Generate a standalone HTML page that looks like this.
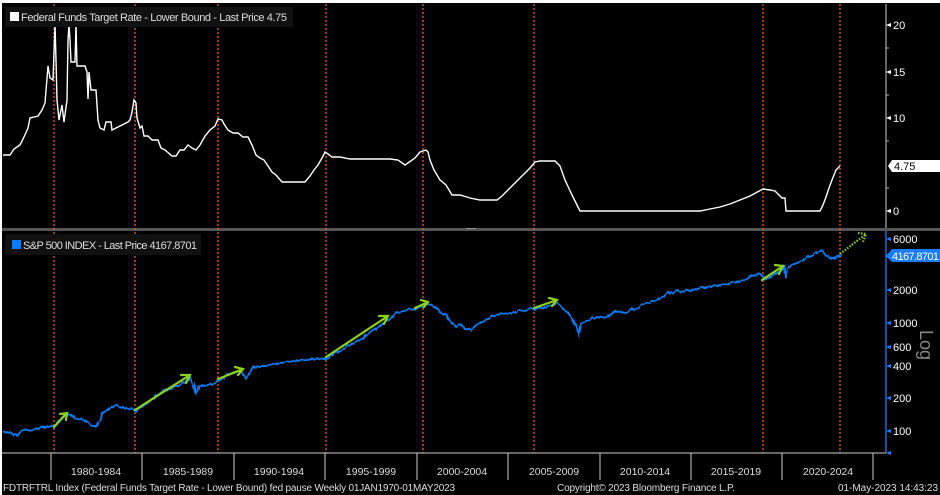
<!DOCTYPE html>
<html><head><meta charset="utf-8"><style>
html,body{margin:0;padding:0;background:#000;}
svg{display:block;}
text{font-family:"Liberation Sans",sans-serif;}
</style></head><body>
<svg width="940" height="495" viewBox="0 0 940 495" xmlns="http://www.w3.org/2000/svg">
<defs>
<filter id="jit" x="-5%" y="-20%" width="110%" height="140%">
<feTurbulence type="turbulence" baseFrequency="0.2 0.05" numOctaves="2" seed="3" result="t"/>
<feDisplacementMap in="SourceGraphic" in2="t" scale="4" xChannelSelector="R" yChannelSelector="G"/>
</filter>
</defs>
<rect width="940" height="495" fill="#000"/>
<rect x="0" y="0" width="940" height="3" fill="#fff"/>
<rect x="0" y="0" width="2" height="495" fill="#fff"/>
<rect x="2" y="228" width="938" height="3" fill="#555"/>
<rect x="466" y="228" width="10" height="1" fill="#999"/>
<g stroke="#e8601c" stroke-width="1.3" stroke-dasharray="2,2">
<line x1="54" y1="4" x2="54" y2="453"/><line x1="135" y1="4" x2="135" y2="453"/>
<line x1="218" y1="4" x2="218" y2="453"/><line x1="326" y1="4" x2="326" y2="453"/>
<line x1="423" y1="4" x2="423" y2="453"/><line x1="534" y1="4" x2="534" y2="453"/>
<line x1="763" y1="4" x2="763" y2="453"/><line x1="840" y1="4" x2="840" y2="453"/>
</g>
<line x1="886" y1="4" x2="886" y2="228" stroke="#ccc" stroke-width="1"/>
<g fill="#fff" font-size="11">
<path d="M886 25l5-2v4z M886 72l5-2v4z M886 118l5-2v4z M886 211l5-2v4z"/>
<text x="893" y="29">20</text><text x="893" y="76">15</text><text x="893" y="122">10</text><text x="893" y="215">0</text>
</g>
<g stroke="#aaa"><line x1="886" y1="48" x2="889" y2="48"/><line x1="886" y1="95" x2="889" y2="95"/><line x1="886" y1="141" x2="889" y2="141"/><line x1="886" y1="188" x2="889" y2="188"/></g>
<path d="M888 166l4-6h48v12h-48z" fill="#fff"/>
<text x="894" y="170" font-size="11" fill="#000">4.75</text>
<polyline fill="none" stroke="#fff" stroke-width="1.4" points="3,155 10,155 14,149 20,145 24,137 28,128 30,118 38,116 42,110 45,103 48,66 50,78 53,80 55,25 56,60 57,100 59,120 62,105 64,122 67,100 68,40 69,25 70,40 71,62 75,62 76,25 77,66 85,66 87,72 88,99 89,72 91,90 96,90 98,120 100,128 104,130 106,122 111,122 112,130 128,122 130,120 132,112 134,100 136,103 137,118 140,128 142,126 144,136 148,136 152,140 158,140 161,148 165,150 172,156 176,156 180,150 184,150 188,145 192,148 196,150 200,145 205,136 210,130 215,126 218,119 222,120 224,124 228,130 233,133 238,133 243,137 248,137 252,145 256,155 260,158 264,160 268,166 272,172 276,175 282,182 305,182 310,176 314,170 318,165 322,158 325,152 328,154 332,157 340,157 350,159 390,159 398,160 405,165 415,158 420,152 426,150 428,152 430,160 434,170 440,180 446,185 452,195 460,195 470,198 480,200 497,200 502,196 510,188 520,178 530,168 535,162 540,161 555,161 560,166 565,180 572,195 577,205 580,211 700,211 710,209 720,207 730,204 740,200 750,196 763,189 770,190 775,191 778,194 782,198 785,198 786,211 820,211 823,205 826,197 829,188 832,180 836,170 840,166"/>
<rect x="5" y="7" width="288" height="20" fill="#111"/>
<rect x="10" y="12" width="9" height="9" fill="#fff"/>
<text x="21" y="21" font-size="11" fill="#ddd" textLength="266">Federal Funds Target Rate - Lower Bound - Last Price 4.75</text>
<rect x="5" y="234" width="196" height="21" fill="#111"/>
<rect x="12" y="240" width="9" height="9" fill="#0a7cff"/>
<text x="23" y="249" font-size="11" fill="#ddd" textLength="174">S&amp;P 500 INDEX - Last Price 4167.8701</text>
<line x1="886" y1="231" x2="886" y2="453" stroke="#1a7cff" stroke-width="1.3"/>
<g fill="#1a7cff"><path d="M886 239l5-2v4z M886 290l5-2v4z M886 323l5-2v4z M886 347l5-2v4z M886 366l5-2v4z M886 398l5-2v4z M886 431l5-2v4z M886 453l5-2v4z"/></g>
<g fill="#fff" font-size="11">
<text x="893" y="243">6000</text><text x="893" y="294">2000</text><text x="893" y="327">1000</text><text x="893" y="351">600</text><text x="893" y="370">400</text><text x="893" y="402">200</text><text x="893" y="435">100</text>
</g>
<path d="M886 256l6-7h48v13h-48z" fill="#1a7cff"/>
<text x="892" y="260" font-size="11" fill="#fff" textLength="47">4167.8701</text>
<text transform="translate(920,330) rotate(90)" font-size="18" fill="#888">Log</text>
<polyline filter="url(#jit)" fill="none" stroke="#0a78f0" stroke-width="2" points="3,430 10,432 16,435 22,430 30,429 40,427 48,425 54,427 60,416 67,413 75,417 85,420 90,424 96,425 98,420 102,412 110,406 115,405 125,407 135,410 145,403 155,395 165,389 172,387 180,383 187,379 190,375 193,385 195,392 198,385 205,384 215,382 218,379 230,372 240,370 245,377 250,371 255,366 270,364 290,360 310,358 326,357 340,349 360,338 375,328 385,320 395,313 405,309 415,308 425,304 430,303 435,306 440,312 445,314 450,321 456,326 460,323 464,327 470,329 478,322 490,316 500,313 510,312 520,310 530,308 534,308 545,306 556,303 560,305 565,310 572,318 575,325 578,333 580,323 585,320 592,317 600,315 605,317 615,310 625,312 640,305 655,299 670,292 685,290 700,287 715,285 725,283 740,280 750,275 760,272 763,278 770,275 778,270 783,265 785,277 787,267 795,262 805,257 815,252 820,250 825,254 830,258 835,256 840,254"/>
<g stroke="#8cd11a" stroke-width="2.2" fill="none" stroke-linecap="round">
<path d="M54 427L67 413M60 414L67 413L66 420"/>
<path d="M135 410L190 375M181 375L190 375L186 383"/>
<path d="M218 379L243 369M235 367L243 369L238 375"/>
<path d="M326 357L388 316M379 316L388 316L384 324"/>
<path d="M415 308L428 302M421 300L428 302L424 307"/>
<path d="M534 308L557 300M549 298L557 300L552 306"/>
<path d="M762 280L783 266M775 265L783 266L779 274"/>
</g>
<path d="M840 254L866 234M858 233L866 234L863 242" stroke="#8cd11a" stroke-width="2.2" fill="none" stroke-dasharray="1.5,1.5"/>
<line x1="2" y1="453" x2="886" y2="453" stroke="#ccc"/>
<g stroke="#ccc">
<line x1="51" y1="453" x2="51" y2="480"/><line x1="142" y1="453" x2="142" y2="480"/><line x1="234" y1="453" x2="234" y2="480"/><line x1="325" y1="453" x2="325" y2="480"/><line x1="417" y1="453" x2="417" y2="480"/><line x1="508" y1="453" x2="508" y2="480"/><line x1="600" y1="453" x2="600" y2="480"/><line x1="691" y1="453" x2="691" y2="480"/><line x1="782" y1="453" x2="782" y2="480"/><line x1="873" y1="453" x2="873" y2="480"/>
</g>
<g fill="#ddd" font-size="10.5" text-anchor="middle">
<text x="96" y="475">1980-1984</text><text x="188" y="475">1985-1989</text><text x="279" y="475">1990-1994</text><text x="371" y="475">1995-1999</text><text x="462" y="475">2000-2004</text><text x="554" y="475">2005-2009</text><text x="645" y="475">2010-2014</text><text x="736" y="475">2015-2019</text><text x="828" y="475">2020-2024</text>
</g>
<g fill="#ddd" font-size="10">
<text x="3" y="491" textLength="452">FDTRFTRL Index (Federal Funds Target Rate - Lower Bound) fed pause  Weekly 01JAN1970-01MAY2023</text>
<text x="557" y="491" textLength="178">Copyright© 2023 Bloomberg Finance L.P.</text>
<text x="838" y="491" textLength="100">01-May-2023 14:43:23</text>
</g>
</svg>
</body></html>
